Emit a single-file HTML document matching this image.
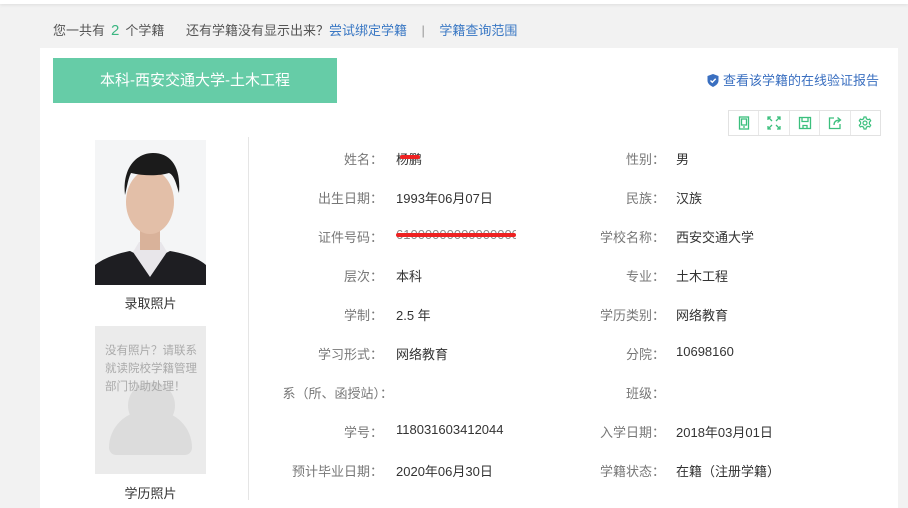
<!DOCTYPE html>
<html><head><meta charset="utf-8"><style>
*{margin:0;padding:0;box-sizing:border-box}
body{width:908px;height:500px;overflow:hidden;background:#f2f2f2;font-family:"Liberation Sans","Noto Sans CJK SC",sans-serif;font-size:13px;color:#333;position:relative}
.top{position:absolute;left:0;top:0;width:908px;height:4px;background:#fff;box-shadow:0 1px 3px #ddd}
.hd{position:absolute;left:53px;top:20px;font-size:13px;color:#555;white-space:nowrap}
.hd .n{color:#3bb581;font-size:15px;margin:0 6px}
.hd a{color:#3a78c4;text-decoration:none}
.card{position:absolute;left:40px;top:48px;width:858px;height:460px;background:#fff}
.ban{position:absolute;left:53px;top:58px;width:284px;height:45px;background:#66cca7;color:#fff;font-size:15px;line-height:45px;padding-left:47px}
.rep{position:absolute;left:707px;top:70px;color:#3a6fc0;font-size:13px;white-space:nowrap}
.icons{position:absolute;left:728px;top:110px;width:153px;height:26px;border:1px solid #e2e2e2;display:flex}
.icons div{flex:1;border-right:1px solid #e8e8e8;display:flex;align-items:center;justify-content:center}
.icons div:last-child{border:0}
.photo{position:absolute;left:95px;top:140px;width:111px;height:145px;background:#f4f5f6;overflow:hidden}
.cap{position:absolute;width:111px;left:95px;text-align:center;font-size:13px;color:#333}
.ph2{position:absolute;left:95px;top:326px;width:111px;height:148px;background:#ebebeb;overflow:hidden}
.ph2 p{position:absolute;left:10px;top:16px;width:96px;font-size:11.5px;line-height:18px;color:#aaa;z-index:2}
.vl{position:absolute;left:248px;top:137px;width:1px;height:363px;background:#e5e5e5}
.l{position:absolute;text-align:right;color:#777;white-space:nowrap}
.v{position:absolute;color:#333;white-space:nowrap}
</style></head><body>
<div class="top"></div>
<div class="hd">您一共有<span class="n">2</span>个学籍&nbsp;&nbsp;&nbsp;&nbsp;&nbsp;&nbsp;还有学籍没有显示出来？<a>尝试绑定学籍</a>&nbsp;&nbsp;&nbsp;&nbsp;<span style="color:#999">|</span>&nbsp;&nbsp;&nbsp;&nbsp;<a>学籍查询范围</a></div>
<div class="card"></div>
<div class="ban">本科-西安交通大学-土木工程</div>
<div class="rep"><svg width="12" height="13" viewBox="0 0 12 13" style="vertical-align:-2px;margin-right:4px"><path d="M6 0L11.5 2V6.5C11.5 9.5 9 11.5 6 13C3 11.5 0.5 9.5 0.5 6.5V2Z" fill="#3a6fc0"/><path d="M3.5 6.5L5.3 8.3L8.7 4.8" stroke="#fff" stroke-width="1.4" fill="none"/></svg>查看该学籍的在线验证报告</div>
<div class="icons">
<div><svg width="14" height="14" viewBox="0 0 14 14" fill="none" stroke="#3bbf7d" stroke-width="1.3"><rect x="2.5" y="1" width="9" height="12"/><rect x="4.5" y="3" width="5" height="6"/><path d="M6 11h2"/></svg></div>
<div><svg width="14" height="14" viewBox="0 0 14 14" fill="none" stroke="#3bbf7d" stroke-width="1.3"><path d="M1 1l4 4M13 1l-4 4M1 13l4-4M13 13l-4-4M1 4V1h3M10 1h3v3M1 10v3h3M13 10v3h-3"/></svg></div>
<div><svg width="14" height="14" viewBox="0 0 14 14" fill="none" stroke="#3bbf7d" stroke-width="1.3"><rect x="1.5" y="1.5" width="11" height="11"/><path d="M4 1.5v4h6v-4M5 12.5v-3h4v3"/></svg></div>
<div><svg width="14" height="14" viewBox="0 0 14 14" fill="none" stroke="#3bbf7d" stroke-width="1.3"><path d="M6 2H1.5v10.5H12V8M6 9c0-4 3-5 6-5M9.5 1.5L12.5 4L9.5 6.5"/></svg></div>
<div><svg width="14" height="14" viewBox="0 0 14 14" fill="none" stroke="#3bbf7d" stroke-width="1.2"><path d="M6 1h2l.4 1.8 1.6.9 1.7-.6 1 1.7-1.3 1.3v1.8l1.3 1.3-1 1.7-1.7-.6-1.6.9L8 13H6l-.4-1.8-1.6-.9-1.7.6-1-1.7 1.3-1.3V6.1L1.3 4.8l1-1.7 1.7.6 1.6-.9z"/><circle cx="7" cy="7" r="2"/></svg></div>
</div>
<div class="photo"><svg width="111" height="145" viewBox="0 0 111 145">
<path d="M0 145V125c10-8 25-12 35-14l20 10 20-10c12 2 27 6 36 14v20z" fill="#1e1e22"/>
<path d="M38 112l17 25 17-25-6-10H44z" fill="#e8e6ea"/>
<rect x="45" y="85" width="20" height="25" fill="#d9b29a"/>
<ellipse cx="55" cy="62" rx="24" ry="32" fill="#e3bfa8"/>
<path d="M30 55c-3-25 10-42 28-42s28 14 26 40c-3-10-5-18-10-20-10 3-25 3-38 0-3 6-4 14-6 22z" fill="#1b1b1b"/>
</svg></div>
<div class="cap" style="top:293px">录取照片</div>
<div class="ph2"><p>没有照片？请联系就读院校学籍管理部门协助处理！</p>
<div style="position:absolute;left:33px;top:56px;width:47px;height:47px;border-radius:50%;background:#dcdcdc"></div>
<div style="position:absolute;left:14px;top:85px;width:83px;height:44px;border-radius:40px 40px 8px 8px;background:#dcdcdc"></div></div>
<div class="cap" style="top:483px">学历照片</div>
<div class="vl"></div>

<div class="l" style="right:525px;top:149px">姓名：</div><div class="v" style="left:396px;top:149px">杨鹏<span style="position:absolute;left:4px;top:6px;width:20px;height:4px;background:#e22;border-radius:2px"></span></div>
<div class="l" style="right:525px;top:188px">出生日期：</div><div class="v" style="left:396px;top:188px">1993年06月07日</div>
<div class="l" style="right:525px;top:227px">证件号码：</div><div class="v" style="left:396px;top:227px;width:120px;overflow:hidden;color:#888">610000000000000000<span style="position:absolute;left:0;top:6px;width:120px;height:4px;background:#e22;border-radius:2px"></span></div>
<div class="l" style="right:525px;top:266px">层次：</div><div class="v" style="left:396px;top:266px">本科</div>
<div class="l" style="right:525px;top:305px">学制：</div><div class="v" style="left:396px;top:305px">2.5 年</div>
<div class="l" style="right:525px;top:344px">学习形式：</div><div class="v" style="left:396px;top:344px">网络教育</div>
<div class="l" style="right:515px;top:383px">系（所、函授站）：</div>
<div class="l" style="right:525px;top:422px">学号：</div><div class="v" style="left:396px;top:422px">118031603412044</div>
<div class="l" style="right:525px;top:461px">预计毕业日期：</div><div class="v" style="left:396px;top:461px">2020年06月30日</div>

<div class="l" style="right:243px;top:149px">性别：</div><div class="v" style="left:676px;top:149px">男</div>
<div class="l" style="right:243px;top:188px">民族：</div><div class="v" style="left:676px;top:188px">汉族</div>
<div class="l" style="right:243px;top:227px">学校名称：</div><div class="v" style="left:676px;top:227px">西安交通大学</div>
<div class="l" style="right:243px;top:266px">专业：</div><div class="v" style="left:676px;top:266px">土木工程</div>
<div class="l" style="right:243px;top:305px">学历类别：</div><div class="v" style="left:676px;top:305px">网络教育</div>
<div class="l" style="right:243px;top:344px">分院：</div><div class="v" style="left:676px;top:344px">10698160</div>
<div class="l" style="right:243px;top:383px">班级：</div>
<div class="l" style="right:243px;top:422px">入学日期：</div><div class="v" style="left:676px;top:422px">2018年03月01日</div>
<div class="l" style="right:243px;top:461px">学籍状态：</div><div class="v" style="left:676px;top:461px">在籍（注册学籍）</div>
</body></html>
